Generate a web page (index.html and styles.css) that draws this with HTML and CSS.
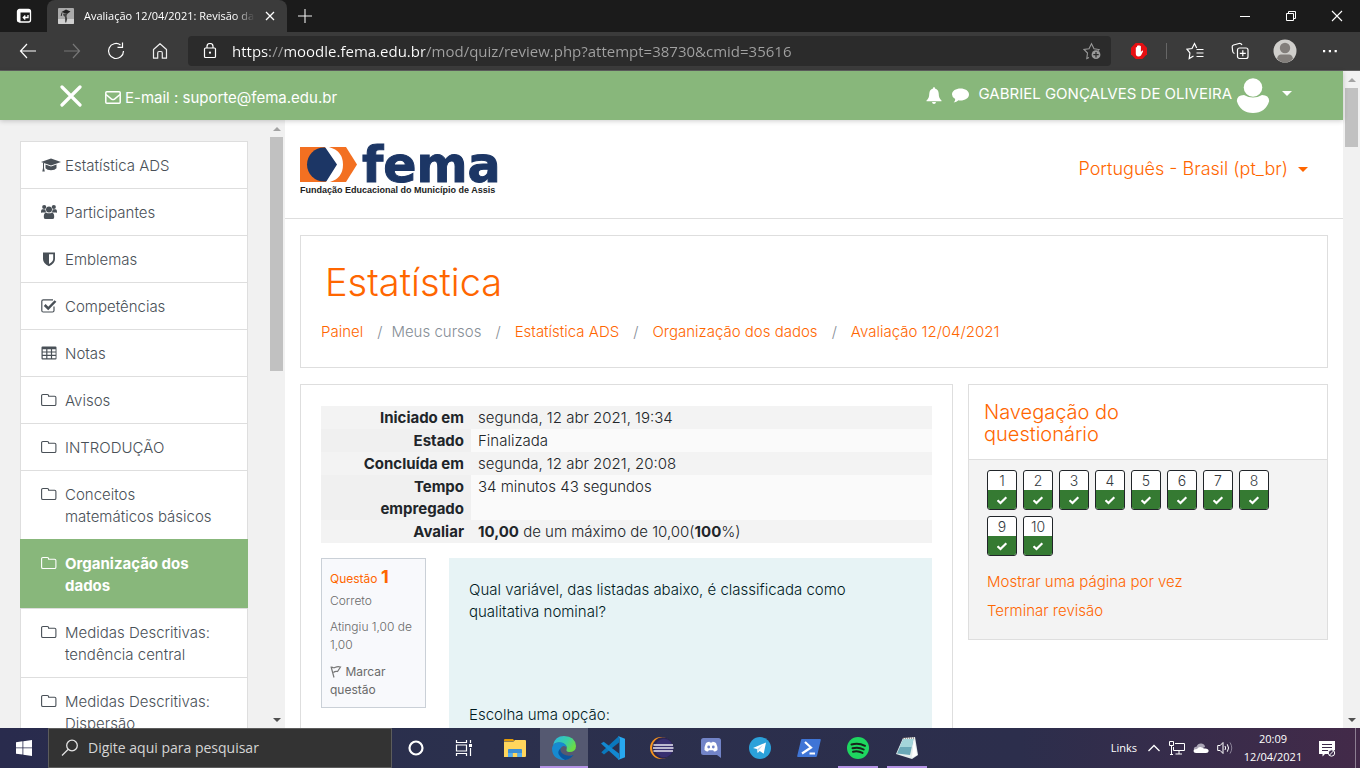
FILE: index.html
```html
<!DOCTYPE html>
<html lang="pt-BR">
<head>
<meta charset="utf-8">
<meta name="viewport" content="width=device-width, initial-scale=1">
<title>Avaliação 12/04/2021: Revisão da tentativa</title>
<link rel="stylesheet" href="styles.css">
</head>
<body>
<svg class="defs" aria-hidden="true">
  <symbol id="folder" viewBox="0 0 16 16"><path d="M.6 4v8.2q0 1.3 1.3 1.3h11.7q1.3 0 1.3-1.3V5.600q0-1.300-1.300-1.300H7.600V3.700Q7.600 2.500 6.300 2.500H1.900Q.6 2.500.6 3.800z" fill="none" stroke="currentColor" stroke-width="1.100"/></symbol>
  <symbol id="check" viewBox="0 0 12 12"><path d="M1.500 6.200 4.500 9 10.300 3.300" fill="none" stroke="currentColor" stroke-width="2.200"/></symbol>
</svg>

<div class="browser">
  <div class="titlebar">
    <button class="icon-btn tab-menu" aria-label="Menu de guias"><svg width="16" height="16" viewBox="0 0 16 16"><rect x="1.500" y="1.500" width="13" height="12.500" rx="2" fill="none" stroke="#fff" stroke-width="1.300"/><path d="M1.500 4h3v10h-2q-1-.2-1-1zM2 2h12v2.500H2z" fill="#fff"/><path d="M12 7v2.500H7.500M9.300 7.500l-2 2 2 2" fill="none" stroke="#fff" stroke-width="1.300"/></svg></button>
    <div class="tab">
      <svg width="16" height="16" viewBox="0 0 16 16"><rect width="16" height="16" rx="1" fill="#aaa"/><path d="M0 11h16v4q0 1-1 1H1q-1 0-1-1z" fill="#d0d0d0"/><path d="M3.500 4 8 1.500l4.500 2L9 6z" fill="#222"/><path d="M5.500 5.500h4l-1 2.500.7 3-1 3.500h-1L7 9 5 7z" fill="#444"/><path d="M4 4.500 3.200 8" stroke="#333" fill="none"/></svg>
      <span class="tab-title">Avaliação 12/04/2021: Revisão da</span>
      <button class="icon-btn tab-close" aria-label="Fechar guia"><svg width="10" height="10" viewBox="0 0 10 10"><path d="m1 1 8 8M9 1 1 9" stroke="#fff" stroke-width="1.300"/></svg></button>
    </div>
    <button class="icon-btn new-tab" aria-label="Nova guia"><svg width="16" height="16" viewBox="0 0 16 16"><path d="M8 1v14M1 8h14" stroke="#eee" stroke-width="1.100"/></svg></button>
    <div class="window-buttons">
      <button class="icon-btn" aria-label="Minimizar"><svg width="12" height="12" viewBox="0 0 12 12"><path d="M1 6.500h10" stroke="#fff"/></svg></button>
      <button class="icon-btn" aria-label="Restaurar"><svg width="12" height="12" viewBox="0 0 12 12"><path d="M1.500 3.500h7v7h-7zM3.500 3.500v-2h7v7h-2" fill="none" stroke="#fff"/></svg></button>
      <button class="icon-btn" aria-label="Fechar"><svg width="12" height="12" viewBox="0 0 12 12"><path d="m1 1 10 10M11 1 1 11" stroke="#fff" stroke-width="1.100"/></svg></button>
    </div>
  </div>

  <div class="toolbar">
    <div class="nav-buttons">
      <button class="icon-btn" aria-label="Voltar"><svg width="18" height="16" viewBox="0 0 18 16"><path d="M17 8H1.500M8 1 1.500 8 8 15" fill="none" stroke="#fff" stroke-width="1.200"/></svg></button>
      <button class="icon-btn" aria-label="Avançar"><svg width="18" height="16" viewBox="0 0 18 16"><path d="M1 8h15.500M10 1l6.500 7-6.500 7" fill="none" stroke="#777" stroke-width="1.200"/></svg></button>
      <button class="icon-btn" aria-label="Atualizar"><svg width="18" height="18" viewBox="0 0 18 18"><path d="M13.500 3A7.500 7.500 0 1 0 16.500 9M15.500.5v4.800h-5" fill="none" stroke="#fff" stroke-width="1.200"/></svg></button>
      <button class="icon-btn" aria-label="Página inicial"><svg width="16" height="18" viewBox="0 0 16 18"><path d="M1.500 7.500 8 1.700l6.500 5.800v8.700H10.300V11q0-1.500-1.300-1.500H7Q5.700 9.500 5.700 11v5.200H1.500z" fill="none" stroke="#eee" stroke-width="1.200" stroke-linejoin="round"/></svg></button>
    </div>
    <div class="address">
      <svg width="14" height="16" viewBox="0 0 14 16"><rect x="1.500" y="5" width="11" height="9.500" rx="1" fill="none" stroke="#fff" stroke-width="1.200"/><path d="M4 5V3.500a3 3 0 0 1 6 0V5" fill="none" stroke="#fff" stroke-width="1.200"/><circle cx="7" cy="9.700" r="1.100" fill="#fff"/></svg>
      <input class="url" type="text" aria-label="Endereço" value="https://moodle.fema.edu.br/mod/quiz/review.php?attempt=38730&amp;cmid=35616">
      <button class="icon-btn" aria-label="Adicionar aos favoritos"><svg width="18" height="18" viewBox="0 0 18 18"><path d="m6 15.500-2.200 1 .7-5.500L1 7.500l5-.8L8.500 1.800l2.500 4.900 5 .8-1 1" fill="none" stroke="#999" stroke-width="1.100"/><circle cx="13" cy="12.700" r="4.400" fill="#999"/><path d="M13 10v5.400M10.300 12.700h5.400" stroke="#2b2b2b" stroke-width="1.200"/></svg></button>
    </div>
    <div class="tool-buttons">
      <button class="icon-btn" aria-label="AdBlock"><svg width="16" height="16" viewBox="0 0 16 16"><path d="M4.700 0h6.600L16 4.700v6.600L11.300 16H4.700L0 11.300V4.700z" fill="#e60f12"/><path d="M4.800 8V4.500q.7-.8 1.200 0V3q.8-.8 1.300 0v-.5q.8-.8 1.300 0V3.200q.8-.7 1.300.1V9l1.300-1.500q1.200 0 .8 1L10 12.500q-1 1-2.600 1-2.600-.1-2.600-3z" fill="#fff"/></svg></button>
      <span class="divider"></span>
      <button class="icon-btn" aria-label="Favoritos"><svg width="18" height="18" viewBox="0 0 18 18"><path d="m7.500 14-4.300 2.500.7-5.500L1 7.200l5-.7 2.500-5 2.200 4.500M10.500 7.500h7M10.500 11h7M10.500 14.500h7" fill="none" stroke="#fff" stroke-width="1.200"/></svg></button>
      <button class="icon-btn" aria-label="Coleções"><svg width="18" height="18" viewBox="0 0 18 18"><path d="M3.500 11.500Q2 11 1.700 9.500L1.200 5Q1 3.500 2.500 3L8 1.500q2-.5 3 1.500" fill="none" stroke="#fff" stroke-width="1.200"/><rect x="6.500" y="6" width="10.500" height="10.500" rx="2" fill="none" stroke="#fff" stroke-width="1.200"/><path d="M11.800 8.300v6M8.800 11.300h6" stroke="#fff" stroke-width="1.200"/></svg></button>
      <button class="icon-btn" aria-label="Perfil"><svg width="24" height="24" viewBox="0 0 24 24"><circle cx="12" cy="12" r="11.500" fill="#d0cfcc"/><circle cx="12" cy="9" r="5.200" fill="#827e7b"/><path d="M4 19.500Q5 15.500 8 15.500h8q3 0 4 4-3 4-8 4t-8-4z" fill="#827e7b"/></svg></button>
      <button class="icon-btn" aria-label="Configurações"><svg width="16" height="4" viewBox="0 0 16 4"><path d="M1 1h2.200v2.200H1zM6.800 1H9v2.200H6.800zM12.600 1h2.200v2.200h-2.200z" fill="#fff"/></svg></button>
    </div>
  </div>

  <div class="viewport">
    <div class="page">
      <header class="topbar">
        <button class="icon-btn drawer-toggle" aria-label="Fechar painel lateral"><svg width="22" height="22" viewBox="0 0 22 22"><path d="m2 2 18 18M20 2 2 20" stroke="#fff" stroke-width="3.200" stroke-linecap="round"/></svg></button>
        <a class="mail" href="mailto:suporte@fema.edu.br"><svg width="16" height="13" viewBox="0 0 16 13"><rect x=".8" y=".8" width="14.400" height="11.400" rx="1" fill="none" stroke="#fff" stroke-width="1.500"/><path d="m1 3.500 5.500 4.600q1.500 1 3 0L15 3.500" fill="none" stroke="#fff" stroke-width="1.500"/></svg><span>E-mail : suporte@fema.edu.br</span></a>
        <div class="user-area">
          <button class="icon-btn" aria-label="Notificações"><svg width="16" height="17" viewBox="0 0 16 17"><path d="M8 0q1 0 1 1.500Q12.500 2.500 12.700 6.500 12.800 11.500 15.500 13.500v.8H.5v-.8Q3.200 11.500 3.300 6.500 3.500 2.500 7 1.500 7 0 8 0zM6 15h4q-.3 2-2 2t-2-2z" fill="#fff"/></svg></button>
          <button class="icon-btn" aria-label="Mensagens"><svg width="17" height="15" viewBox="0 0 17 15"><path d="M8.500.5C13 .5 17 2.800 17 6.400s-4 6-8.500 6q-1.200 0-2-.2Q4.500 14 1.700 14.500 3.200 13 3.200 11 0 9.200 0 6.400C0 2.800 4 .5 8.500.5z" fill="#fff"/></svg></button>
          <button class="user-menu"><span>GABRIEL GONÇALVES DE OLIVEIRA</span><svg width="34" height="36" viewBox="0 0 34 36"><circle cx="17" cy="9.500" r="9.300" fill="#fff"/><path d="M8 17Q17 22 26 17q7 0 7.200 6Q29.500 35 17 35T.8 23Q1 17 8 17z" fill="#fff"/></svg><i class="caret"></i></button>
        </div>
      </header>

      <div class="columns">
        <aside class="drawer">
          <nav class="drawer-scroll">
            <ul class="nav-list">
              <li><a href="#"><svg viewBox="0 0 20 16" class="wide"><path d="M10 1.500 20 5l-10 3.500L0 5z" fill="currentColor"/><path d="M4.500 7.500 10 9.500l5.500-2v3.800Q14 13.300 10 13.300t-5.500-2zM2 6h1v5l.8 3.500H1.300L2 11z" fill="currentColor"/></svg><span>Estatística ADS</span></a></li>
              <li><a href="#"><svg viewBox="0 0 17 16"><g fill="currentColor"><circle cx="3.400" cy="2.700" r="2.200"/><circle cx="13.600" cy="2.700" r="2.200"/><circle cx="8.500" cy="5.300" r="3.200"/><path d="M0 8.300Q0 5 1.500 5h2.200q.6 0 1 .4 0 2 1 3.200H1Q0 9.300 0 8.300zM17 8.300Q17 5 15.500 5h-2.200q-.6 0-1 .4 0 2-1 3.200H16q1 .7 1-.3zM3 12.500Q3 9 5.500 8.700q3 1.500 6 0Q14 9 14 12.500v1q0 2-2 2H5q-2 0-2-2z"/></g></svg><span>Participantes</span></a></li>
              <li><a href="#"><svg viewBox="0 0 16 16"><path d="M2 1.500h12V8q0 4.500-6 7.300Q2 12.500 2 8zM8 3.200V13q4.200-2.400 4.200-5V3.200z" fill="currentColor" fill-rule="evenodd"/></svg><span>Emblemas</span></a></li>
              <li><a href="#"><svg viewBox="0 0 16 16"><path d="M13 8.500v4q0 1.500-1.500 1.500H2.300Q.8 14 .8 12.500V3.300q0-1.500 1.500-1.500H12" fill="none" stroke="currentColor" stroke-width="1.200"/><path d="m3.700 7 3.500 3.500L14.500 3" fill="none" stroke="currentColor" stroke-width="2.500"/></svg><span>Competências</span></a></li>
              <li><a href="#"><svg viewBox="0 0 16 16"><path d="M1.500 1.500h13q1 0 1 1v11q0 1-1 1h-13q-1 0-1-1v-11q0-1 1-1zM1.700 4.300v2.200h3.500V4.300zm4.700 0v2.200h3.500V4.300zm4.700 0v2.200h3.500V4.300zM1.700 7.600v2.200h3.500V7.600zm4.700 0v2.200h3.500V7.600zm4.700 0v2.200h3.500V7.600zM1.700 10.900v2.300h3.500v-2.300zm4.700 0v2.300h3.500v-2.300zm4.700 0v2.300h3.500v-2.300z" fill="currentColor" fill-rule="evenodd"/></svg><span>Notas</span></a></li>
              <li><a href="#"><svg><use href="#folder"/></svg><span>Avisos</span></a></li>
              <li><a href="#"><svg><use href="#folder"/></svg><span>INTRODUÇÃO</span></a></li>
              <li><a href="#"><svg><use href="#folder"/></svg><span>Conceitos<br>matemáticos básicos</span></a></li>
              <li class="active"><a href="#" aria-current="true"><svg><use href="#folder"/></svg><span>Organização dos<br>dados</span></a></li>
              <li><a href="#"><svg><use href="#folder"/></svg><span>Medidas Descritivas:<br>tendência central</span></a></li>
              <li><a href="#"><svg><use href="#folder"/></svg><span>Medidas Descritivas:<br>Dispersão</span></a></li>
            </ul>
          </nav>
          <div class="scrollbar" aria-hidden="true"><i class="arrow up"></i><i class="thumb thumb-drawer"></i><i class="arrow down"></i></div>
        </aside>

        <main class="main">
          <div class="brandbar">
            <a href="#" class="brand" aria-label="FEMA">
              <svg width="204" height="52" viewBox="0 0 204 52">
                <path d="M0 4h46l11 17.500L46 39H0z" fill="#f37021"/>
                <circle cx="24" cy="21.500" r="17" fill="#1c3665"/>
                <path d="M25 4 37 21.500 26 39h4q13-4 13-17.500T29 4z" fill="#fff"/>
                <text x="62" y="39" class="brand-name">fema</text>
                <text x="0" y="50" class="brand-tag">Fundação Educacional do Município de Assis</text>
              </svg>
            </a>
            <button class="language"><span>Português - Brasil ‎(pt_br)‎</span><i class="caret"></i></button>
          </div>

          <div class="content">
            <section class="card page-header">
              <h1>Estatística</h1>
              <ol class="breadcrumb">
                <li><a href="#">Painel</a></li>
                <li class="tight">Meus cursos</li>
                <li><a href="#">Estatística ADS</a></li>
                <li><a href="#">Organização dos dados</a></li>
                <li><a href="#">Avaliação 12/04/2021</a></li>
              </ol>
            </section>

            <div class="quiz">
              <section class="card review">
                <table class="summary">
                  <tbody>
                    <tr><th scope="row">Iniciado em</th><td>segunda, 12 abr 2021, 19:34</td></tr>
                    <tr><th scope="row">Estado</th><td>Finalizada</td></tr>
                    <tr><th scope="row">Concluída em</th><td>segunda, 12 abr 2021, 20:08</td></tr>
                    <tr><th scope="row">Tempo<br>empregado</th><td>34 minutos 43 segundos</td></tr>
                    <tr><th scope="row">Avaliar</th><td><b>10,00</b> de um máximo de 10,00(<b>100</b>%)</td></tr>
                  </tbody>
                </table>
                <div class="question">
                  <div class="info">
                    <h2>Questão <b>1</b></h2>
                    <p class="state">Correto</p>
                    <p class="grade">Atingiu 1,00 de<br>1,00</p>
                    <a href="#" class="flag"><svg width="12" height="13" viewBox="0 0 12 13"><path d="M1 1.500 4 12.500M2 2q1.500 1.300 3.500.3T10.500 2L7.500 6.500Q5 6 3.500 7.500" fill="none" stroke="#777" stroke-width="1.200"/></svg> Marcar<br>questão</a>
                  </div>
                  <div class="formulation">
                    <p>Qual variável, das listadas abaixo, é classificada como<br>qualitativa nominal?</p>
                    <p class="prompt">Escolha uma opção:</p>
                  </div>
                </div>
              </section>

              <aside class="card block">
                <h3>Navegação do<br>questionário</h3>
                <div class="block-body">
                  <div class="qn-list">
                    <a href="#">1<span><svg><use href="#check"/></svg></span></a>
                    <a href="#">2<span><svg><use href="#check"/></svg></span></a>
                    <a href="#">3<span><svg><use href="#check"/></svg></span></a>
                    <a href="#">4<span><svg><use href="#check"/></svg></span></a>
                    <a href="#">5<span><svg><use href="#check"/></svg></span></a>
                    <a href="#">6<span><svg><use href="#check"/></svg></span></a>
                    <a href="#">7<span><svg><use href="#check"/></svg></span></a>
                    <a href="#">8<span><svg><use href="#check"/></svg></span></a>
                    <a href="#">9<span><svg><use href="#check"/></svg></span></a>
                    <a href="#">10<span><svg><use href="#check"/></svg></span></a>
                  </div>
                  <a class="block-link" href="#">Mostrar uma página por vez</a>
                  <a class="block-link" href="#">Terminar revisão</a>
                </div>
              </aside>
            </div>
          </div>
        </main>
      </div>
    </div>
    <div class="scrollbar" aria-hidden="true"><i class="arrow up"></i><i class="thumb thumb-page"></i><i class="arrow down"></i></div>
  </div>
</div>

<footer class="taskbar">
  <button class="task" aria-label="Iniciar"><svg width="16" height="16" viewBox="0 0 16 16"><path d="M0 2.200 6.500 1.300v6.200H0zM7.300 1.200 16 0v7.500H7.300zM0 8.300h6.500v6.300L0 13.700zM7.300 8.300H16V16l-8.700-1.200z" fill="#fff"/></svg></button>
  <label class="search"><svg width="18" height="18" viewBox="0 0 18 18"><circle cx="11" cy="6.500" r="5.300" fill="none" stroke="#e4e4e4" stroke-width="1.300"/><path d="M7 10.500 1 16.500" stroke="#e4e4e4" stroke-width="1.300"/></svg><input type="text" aria-label="Pesquisar" placeholder="Digite aqui para pesquisar"></label>
  <button class="task" aria-label="Cortana"><svg width="16" height="16" viewBox="0 0 16 16"><circle cx="8" cy="8" r="6.500" fill="none" stroke="#fff" stroke-width="2.200"/></svg></button>
  <button class="task" aria-label="Visão de tarefas"><svg width="18" height="16" viewBox="0 0 18 16"><path d="M1.500 0v2.500h10V0M1.500 16v-2.500h10V16M1.500 5h10v6h-10zM15.500 0v3M15.500 8v8" fill="none" stroke="#fff" stroke-width="1.200"/><path d="M14 4h3v3h-3z" fill="#fff"/></svg></button>
  <div class="apps">
    <button class="task" aria-label="Explorador de Arquivos"><svg width="22" height="20" viewBox="0 0 22 20"><path d="M0 2q0-1 1-1h8l1.500 2H0z" fill="#e39b06"/><path d="M0 3.500h9.500L11 2h10q1 0 1 1v15q0 1-1 1H0z" fill="#ffd65c"/><path d="M4 19v-7.500Q4 11 5 11h12q1 0 1 .8V19h-4.500v-4h-5v4z" fill="#3d8fd4"/><path d="M4 15h4.500v4H4zM13.500 15H18v4h-4.500z" fill="#55aef0"/></svg></button>
    <button class="task current" aria-label="Microsoft Edge"><svg width="24" height="24" viewBox="0 0 24 24"><defs><linearGradient id="eg" x1="0" y1="0" x2="1" y2=".5"><stop stop-color="#2bb5e8"/><stop offset=".6" stop-color="#39cfa4"/><stop offset="1" stop-color="#6bdc45"/></linearGradient></defs><path d="M1 9Q3 0 12 0q11 0 12 10 0 6-7 6-3-.5-2.500-2 1.500-5-4-7Q4 5.500 1 9z" fill="url(#eg)"/><path d="M0 12Q1 6.500 7 6.200q6-.2 7.800 5-4.500-3-6.300 1.300Q7 17 11.500 20q4 2 9-1Q17 24 12 24 0 23.500 0 12z" fill="#168ad0"/><path d="M8.600 12.300q-4.500 4-.6 8 1.500 2 5 3.600 5-.5 8.500-5-6 2-10-.6-4-2.500-2.900-6z" fill="#0c559d"/></svg></button>
    <button class="task" aria-label="Visual Studio Code"><svg width="24" height="24" viewBox="0 0 24 24"><path d="M18 0v6.500L3 18.500.3 16.300z" fill="#0a78bd"/><path d="M0 7.500 2.700 5.700 18 17.500V24z" fill="#1288d0"/><path d="m17 0 7 2.800v18.400L17 24q1.500-1 1.500-3V3Q18.500 1 17 0z" fill="#28a8f0"/></svg></button>
    <button class="task" aria-label="Eclipse"><svg width="24" height="22" viewBox="0 0 24 22"><circle cx="11" cy="11" r="11" fill="#f7941e"/><circle cx="12.800" cy="11" r="10.700" fill="#2b2550"/><circle cx="14" cy="11" r="9.200" fill="#382f70"/><path d="M3.500 8h19.500M3 11h20.500M3.500 14h19.500" stroke="#e8e6f0" stroke-width="1.300"/></svg></button>
    <button class="task" aria-label="Discord"><svg width="20" height="22" viewBox="0 0 20 22"><path d="M2.500 1h15Q20 1 20 3.500V21l-4-3H2.500Q0 18 0 15.500v-12Q0 1 2.500 1z" fill="#7284c8"/><path d="M5 6q2-1.300 3.500-1.300l.4.800h2.200l.4-.8Q13 4.700 15 6q1.700 3.500 1.500 7-1.700 1.500-3.500 1.500l-.8-1.200H7.800L7 14.500Q5.200 14.500 3.500 13 3.300 9.500 5 6z" fill="#fff"/><circle cx="7.700" cy="10" r="1.400" fill="#7284c8"/><circle cx="12.300" cy="10" r="1.400" fill="#7284c8"/></svg></button>
    <button class="task" aria-label="Telegram"><svg width="22" height="22" viewBox="0 0 22 22"><circle cx="11" cy="11" r="11" fill="#2ba1da"/><path d="m4 11 13-5.500-2.300 11.200-4-2.700-2 2-.9-4z" fill="#fff"/><path d="M8 12.300 14 8l-4.500 5.500-.7 2.300z" fill="#bcdcf0"/></svg></button>
    <button class="task" aria-label="PowerShell"><svg width="24" height="20" viewBox="0 0 24 20"><path d="M5 1h18q1 0 .8 1L20 18q-.2 1-1.200 1H1q-1 0-.8-1L4 2q.2-1 1-1z" fill="#3f75d6"/><path d="m8 4 6 5.500-9 6M12.500 15.500H18" fill="none" stroke="#fff" stroke-width="2.200"/></svg></button>
    <button class="task open" aria-label="Spotify"><svg width="22" height="22" viewBox="0 0 22 22"><circle cx="11" cy="11" r="11" fill="#1ed760"/><path d="M4.500 7.500q7-2 13.500 1.300M5.500 11.300q6-1.700 11.200 1.200M6 14.700q5-1.300 9.500 1.200" fill="none" stroke="#17251b" stroke-width="2" stroke-linecap="round"/></svg></button>
    <button class="task open" aria-label="Bloco de Notas"><svg width="24" height="22" viewBox="0 0 24 22"><path d="m8 1 12-1 3 18-6 4L1 17z" fill="#e6eeee"/><path d="M8.500 2h10L15 18 2 16.500z" fill="#6ba9b8"/><path d="M8.500 2h10l-1.700 8H4.500z" fill="#a4d5da"/><path d="m19 2 3 16-5 2.500z" fill="#fff"/><path d="M8 1h11" stroke="#5c4d43" stroke-dasharray="1 1"/></svg></button>
  </div>
  <div class="tray">
    <span class="links">Links</span>
    <button class="icon-btn" aria-label="Ícones ocultos"><svg width="14" height="10" viewBox="0 0 14 10"><path d="m1.500 8 5.500-5.500L12.500 8" fill="none" stroke="#fff" stroke-width="1.300"/></svg></button>
    <button class="icon-btn" aria-label="Rede"><svg width="16" height="14" viewBox="0 0 16 14"><path d="M6 2.500h9.500v7H4.500V6M10 9.500V13M6.500 13H13" fill="none" stroke="#fff"/><path d="M.5.5h4v4h-4zM2.500 4.500v9M1 13.500h3" fill="none" stroke="#fff"/></svg></button>
    <button class="icon-btn" aria-label="OneDrive"><svg width="16" height="12" viewBox="0 0 16 12"><path d="M3 9Q0 8.500 1 6q1-1.500 2.500-1.300Q5 1 8.500 1.500T12 5z" fill="#aaa5b5"/><path d="M3 11Q.5 11 .5 9T4 7Q6 4 9 5.500l2 1Q15.500 6 15.700 9 15.500 11 13 11z" fill="#fff"/></svg></button>
    <button class="icon-btn" aria-label="Volume"><svg width="16" height="14" viewBox="0 0 16 14"><path d="M.7 4.500h2.500L6 1.500v11l-2.800-3H.7z" fill="none" stroke="#fff"/><path d="M8 5q1.300 2 0 4M10.300 3.300q2.500 3.700 0 7.400" fill="none" stroke="#fff"/><path d="M13 1.500q3.500 5.500 0 11" fill="none" stroke="#8b8398"/></svg></button>
    <span class="clock"><time>20:09</time><time>12/04/2021</time></span>
    <button class="icon-btn" aria-label="Notificações do sistema"><svg width="17" height="17" viewBox="0 0 17 17"><path d="M0 1h16v9l-4 1.500L9 14H6l-2.500 2.500V14H0z" fill="#fff"/><path d="M3 4.500h10M3 7.500h10M3 10.500h6" stroke="#3c2a4a"/><circle cx="12.500" cy="13" r="3.200" fill="#3c2a4a" stroke="#fff"/><path d="m10.500 15 4-4" stroke="#fff"/></svg></button>
    <span class="peek"></span>
  </div>
</footer>
</body>
</html>
```
FILE: styles.css
```css
:root {
  --green: #88b77b;
  --orange: #ff6600;
  --line: #dedede;
  --ui: "Open Sans", "Noto Sans", sans-serif;
  --site: Inter, "Open Sans", sans-serif;
}

* { box-sizing: border-box; }

body {
  margin: 0;
  height: 100vh;
  display: flex;
  flex-direction: column;
  overflow: hidden;
  background: #fff;
  font-family: var(--site);
  font-size: 15px;
  font-weight: 300;
  line-height: 22px;
  color: #212529;
}

button, input { font: inherit; color: inherit; border: 0; padding: 0; background: none; }
a { color: var(--orange); text-decoration: none; }
h1, h2, h3, p, ol, ul { margin: 0; padding: 0; font-weight: 300; }
ol, ul { list-style: none; }
b, th { font-weight: 700; }
svg { display: block; flex: none; }
.defs { position: absolute; width: 0; height: 0; }
.icon-btn { display: flex; align-items: center; justify-content: center; flex: none; }

.browser { flex: 1; min-height: 0; display: flex; flex-direction: column; }

/* Browser chrome */
.titlebar {
  height: 32px;
  flex: none;
  display: flex;
  align-items: stretch;
  background: #1b1b1b;
  color: #fff;
  font-family: var(--ui);
  font-size: 11px;
  font-weight: 400;
  line-height: 32px;
}
.tab-menu { width: 47px; }
.tab {
  width: 240px;
  display: flex;
  align-items: center;
  gap: 10px;
  padding: 0 12px 0 11px;
  background: #3b3b3b;
  border-radius: 8px 8px 0 0;
}
.tab-title {
  flex: 1;
  overflow: hidden;
  white-space: nowrap;
  mask-image: linear-gradient(to right, #000 88%, transparent);
}
.new-tab { width: 36px; }
.window-buttons { margin-left: auto; display: flex; }
.window-buttons .icon-btn { width: 46px; }

.toolbar {
  height: 39px;
  flex: none;
  display: flex;
  align-items: center;
  background: #3b3b3b;
  border-bottom: 1px solid #606060;
}
.nav-buttons { display: flex; width: 188px; padding-left: 6px; }
.nav-buttons .icon-btn { width: 44px; }
.address {
  flex: 1;
  height: 30px;
  display: flex;
  align-items: center;
  gap: 15px;
  padding: 0 10px 0 15px;
  background: #2b2b2b;
  border-radius: 4px;
}
.url {
  flex: 1;
  min-width: 0;
  font-family: var(--ui);
  font-size: 15px;
  font-weight: 400;
  color: #fff;
  outline: 0;
  background: linear-gradient(to right, #fff 38px, #999 38px, #999 53px, #fff 53px, #fff 193px, #a2a2a2 193px);
  background-clip: text;
  -webkit-background-clip: text;
  -webkit-text-fill-color: transparent;
}
.tool-buttons { width: 249px; display: flex; align-items: center; padding-left: 5px; }
.tool-buttons .icon-btn { width: 45px; }
.divider { width: 1px; height: 16px; margin: 0 5px; background: #666; }

/* Page frame */
.viewport { flex: 1; min-height: 0; display: flex; }
.page { flex: 1; min-width: 0; display: flex; flex-direction: column; }
.scrollbar {
  width: 17px;
  flex: none;
  display: flex;
  flex-direction: column;
  align-items: center;
  background: #f1f1f1;
}
.arrow { width: 17px; height: 17px; display: flex; align-items: center; justify-content: center; flex: none; }
.arrow::before { content: ""; border: 4px solid transparent; }
.up::before { border-top: 0; border-bottom-color: #a3a3a3; }
.down::before { border-bottom: 0; border-top-color: #505050; }
.down { margin-top: auto; }
.thumb { width: 13px; background: #c1c1c1; }
.thumb-page { height: 9%; }
.thumb-drawer { height: 234px; }

.topbar {
  height: 49px;
  flex: none;
  display: flex;
  align-items: center;
  padding: 0 51px 0 60px;
  background: var(--green);
  color: #fff;
  font-weight: 400;
  box-shadow: 0 1px 5px rgba(0, 0, 0, .2);
  z-index: 1;
}
.mail { display: flex; align-items: center; gap: 4px; margin-left: 23px; padding-top: 4px; color: #fff; }
.user-area { margin-left: auto; display: flex; align-items: center; gap: 10px; }
.user-menu { display: flex; align-items: center; gap: 4px; }
.user-menu span { padding-bottom: 4px; }
.caret { border: 5px solid transparent; border-top-color: currentColor; border-bottom: 0; }
.user-menu .caret { margin: 0 0 4px 8px; }

.columns { flex: 1; min-height: 0; display: flex; }

/* Side navigation */
.drawer { width: 285px; flex: none; display: flex; background: #f1f1f1; }
.drawer-scroll { flex: 1; overflow: hidden; padding: 21px 20px 0; }
.nav-list { border: 1px solid var(--line); border-top: 0; background: #fff; }
.nav-list a {
  display: flex;
  gap: 8px;
  padding: 13px 20px 11px;
  border-top: 1px solid var(--line);
  color: #495057;
}
.nav-list svg { width: 16px; height: 16px; margin-top: 2px; }
.nav-list span { white-space: nowrap; }
.nav-list .wide { width: 20px; margin-right: -4px; }
.nav-list .active { margin: 0 -1px; }
.nav-list .active a { padding: 13px 21px 11px; background: var(--green); border-color: var(--green); color: #fff; font-weight: 700; }

/* Main column */
.main { flex: 1; min-width: 0; overflow: hidden; background: #fff; }
.brandbar {
  height: 99px;
  display: flex;
  align-items: center;
  justify-content: space-between;
  padding: 0 35px 0 15px;
  border-bottom: 1px solid var(--line);
}
.brand-name { font: 700 49px "DejaVu Sans", sans-serif; fill: #1c3665; stroke: #1c3665; stroke-width: 1px; }
.brand-tag { font: 700 9px "Liberation Sans", sans-serif; fill: #222; }
.language { display: flex; align-items: center; gap: 10px; color: var(--orange); font-size: 18px; }

.content { display: flex; flex-direction: column; gap: 16px; padding: 16px 15px 0; }
.card { border: 1px solid var(--line); background: #fff; }
.page-header { padding: 23px 20px 24px; }
.page-header h1 { padding-left: 4px; font-size: 38px; line-height: 46px; color: var(--orange); }
.breadcrumb { display: flex; flex-wrap: wrap; padding-top: 16px; color: #868e96; }
.breadcrumb li + li::before { content: "/"; padding: 0 14px; color: #868e96; }
.breadcrumb li.tight::before { padding-right: 9px; }

.quiz { display: grid; grid-template-columns: minmax(0, 653fr) minmax(0, 360fr); gap: 15px; align-items: start; }
.review { padding: 21px 20px; min-height: 400px; }
.summary { width: 100%; border-collapse: collapse; }
.summary tr { height: 23px; background: #f3f3f3; }
.summary tr:nth-child(even) { background: #fafafa; }
.summary th, .summary td { padding: 1px 7px 0; vertical-align: top; text-align: left; }
.summary th { width: 150px; text-align: right; background: #f3f3f3; }
.summary tr:nth-child(even) th { background: #f0f0f0; }

.question { display: flex; align-items: flex-start; gap: 23px; margin-top: 15px; }
.info {
  width: 105px;
  flex: none;
  padding: 8px;
  border: 1px solid #cad0d7;
  background: #f8f9fc;
  color: #6a6a6a;
  font-size: 12px;
  font-weight: 400;
  line-height: 18px;
}
.info h2 { font-size: 12px; line-height: 20px; font-weight: 400; color: var(--orange); }
.info h2 b { font-size: 18px; }
.state { padding-top: 3px; }
.grade { padding-top: 8px; }
.flag { display: block; margin-top: 9px; color: #6a6a6a; }
.flag svg { display: inline-block; vertical-align: -2px; }
.formulation { flex: 1; min-height: 240px; padding: 21px 20px; background: #e7f3f5; color: #001a1e; }
.prompt { margin-top: 81px; }

.block h3 { padding: 16px 15px 14px; font-size: 20px; line-height: 22px; color: var(--orange); }
.block-body { padding: 10px 18px; background: #f3f3f3; border-top: 1px solid var(--line); }
.qn-list { display: flex; flex-wrap: wrap; gap: 6px; margin-bottom: 15px; padding-right: 30px; }
.qn-list a {
  width: 30px;
  height: 40px;
  display: flex;
  flex-direction: column;
  overflow: hidden;
  border: 1px solid #212529;
  border-radius: 3px;
  background: #fff;
  color: #343a40;
  font-size: 14px;
  line-height: 19px;
  text-align: center;
}
.qn-list span { flex: 1; display: flex; align-items: center; justify-content: center; background: #357a32; color: #fff; }
.qn-list svg { width: 12px; height: 12px; }
.block-link { display: block; margin-bottom: 7px; }

/* Desktop taskbar */
.taskbar {
  height: 40px;
  flex: none;
  display: flex;
  align-items: stretch;
  background: linear-gradient(to right, #292b4d, #2b304d 35%, #2c2e4c 75%, #432a49);
  color: #fff;
  font-family: var(--ui);
  font-weight: 400;
}
.task { width: 48px; flex: none; display: flex; align-items: center; justify-content: center; border-bottom: 2px solid transparent; padding-top: 2px; }
.search {
  width: 344px;
  display: flex;
  align-items: center;
  gap: 9px;
  padding: 0 12px;
  background: #333;
  border: 1px solid #5c5c5c;
}
.search input { flex: 1; min-width: 0; font-size: 14px; }
.search input::placeholder { color: #d5d5d5; opacity: 1; }
.apps { display: flex; gap: 1px; margin-left: 3px; }
.current { background: #555971; border-color: #b392e4; }
.open { width: 40px; margin: 0 4px; border-color: #b392e4; }
.tray { margin-left: auto; display: flex; align-items: center; gap: 8px; font-size: 11px; line-height: 18px; }
.clock { width: 64px; display: flex; flex-direction: column; align-items: center; }
.links { margin-right: 2px; }
.clock + .icon-btn { margin-left: 6px; }
.peek { width: 1px; align-self: stretch; margin: 0 4px 0 11px; background: #8d7f92; }
```
